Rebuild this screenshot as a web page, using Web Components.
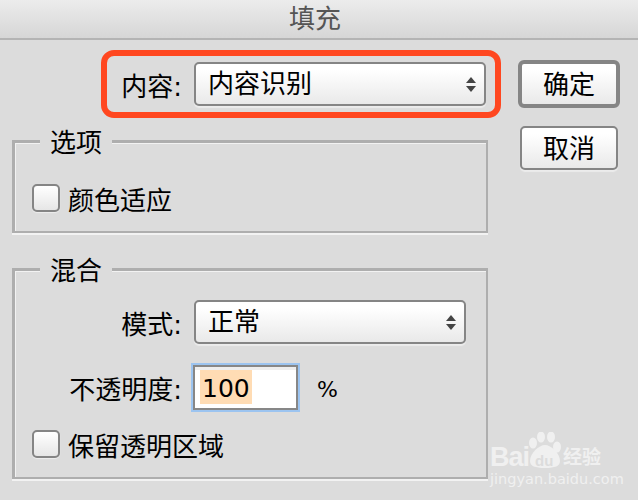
<!DOCTYPE html>
<html lang="zh">
<head>
<meta charset="utf-8">
<title>填充</title>
<style>
  html, body { margin: 0; height: 100%; overflow: hidden; }
  body {
    background: #dcdcdc;
    color: #000;
    font: 26px "DejaVu Sans", "Noto Sans CJK SC", sans-serif;
  }
</style>
</head>
<body>
<fill-dialog>
  <span slot="title">填充</span>
  <highlight-box slot="top">
    <form-row label="内容:" label-width="87">
      <select-box width="292" value="内容识别"></select-box>
    </form-row>
  </highlight-box>
  <group-box slot="groups" legend="选项" style="height:93px">
    <check-row style="margin-top:37px">颜色适应</check-row>
  </group-box>
  <group-box slot="groups" legend="混合" style="height:211px;margin-top:35px">
    <div style="display:flex;flex-direction:column">
      <form-row label="模式:" label-width="162" style="margin-top:29px">
        <select-box width="272" value="正常"></select-box>
      </form-row>
      <form-row label="不透明度:" label-width="162" style="margin-top:19px">
        <percent-field value="100"></percent-field>
      </form-row>
      <check-row style="margin-top:14px">保留透明区域</check-row>
    </div>
  </group-box>
  <dialog-button slot="actions" primary>确定</dialog-button>
  <dialog-button slot="actions">取消</dialog-button>
</fill-dialog>
<baidu-mark></baidu-mark>

<script>
class FillDialog extends HTMLElement {
  constructor () {
    super()
    this.attachShadow({ mode: 'open' }).innerHTML = /* html */`
      <style>
        :host { display: block; width: 638px; height: 500px; }
        header {
          height: 38px;
          border-bottom: 2px solid #b4b4b4;
          background: linear-gradient(#ececec, #d6d6d6);
          color: #555;
          font-size: 26px;
          line-height: 38px;
          text-align: center;
          padding-right: 8px;
        }
        .body { display: flex; padding-left: 12px; }
        .left { width: 489px; }
        .top { padding: 10px 0 22px 89px; }
        .actions { display: flex; flex-direction: column; align-items: center; width: 102px; margin-left: 17px; padding-top: 20px; gap: 18px; }
      </style>
      <header><slot name="title"></slot></header>
      <div class="body">
        <div class="left">
          <div class="top"><slot name="top"></slot></div>
          <slot name="groups"></slot>
        </div>
        <div class="actions"><slot name="actions"></slot></div>
      </div>`
  }
}

class HighlightBox extends HTMLElement {
  constructor () {
    super()
    this.attachShadow({ mode: 'open' }).innerHTML = /* html */`
      <style>
        :host {
          display: flex;
          align-items: center;
          box-sizing: border-box;
          width: 400px;
          height: 68px;
          border: 6px solid #ff4720;
          border-radius: 13px;
        }
      </style>
      <slot></slot>`
  }
}

class FormRow extends HTMLElement {
  constructor () {
    super()
    this.attachShadow({ mode: 'open' })
  }

  connectedCallback () {
    const w = this.getAttribute('label-width')
    this.shadowRoot.innerHTML = /* html */`
      <style>
        :host { display: flex; align-items: center; }
        label { width: ${w}px; box-sizing: border-box; padding-right: 12px; text-align: right; white-space: nowrap; }
      </style>
      <label>${this.getAttribute('label')}</label>
      <slot></slot>`
  }
}

class SelectBox extends HTMLElement {
  constructor () {
    super()
    this.attachShadow({ mode: 'open' })
  }

  connectedCallback () {
    this.shadowRoot.innerHTML = /* html */`
      <style>
        :host {
          display: flex;
          align-items: center;
          justify-content: space-between;
          box-sizing: border-box;
          width: ${this.getAttribute('width')}px;
          height: 44px;
          padding: 0 8px 0 13px;
          border: 2px solid #858585;
          border-radius: 5px;
          background: linear-gradient(#fff 15%, #e9e9e9);
          box-shadow: 0 2px 1px #ececec;
        }
        span { font-size: 26px; line-height: 40px; margin-left: -1px; }
        svg { display: block; }
      </style>
      <span>${this.getAttribute('value')}</span>
      <svg width="10" height="15" viewBox="0 0 10 15"><path d="M5 0 10 6H0Z" fill="#444"/><path d="M0 9H10L5 15Z" fill="#444"/></svg>`
  }
}

class GroupBox extends HTMLElement {
  constructor () {
    super()
    this.attachShadow({ mode: 'open' })
  }

  connectedCallback () {
    this.shadowRoot.innerHTML = /* html */`
      <style>
        :host { display: block; position: relative; box-sizing: border-box; width: 476px; }
        .frame {
          box-sizing: border-box;
          height: 100%;
          border: 3px solid #aeaeae;
          border-right-width: 2px;
          border-bottom-width: 2px;
          box-shadow: inset 1px 1px 0 #f2f2f2, 0 2px 0 #f2f2f2;
          padding: 0 0 0 17px;
          overflow: hidden;
        }
        /* legend sits on top of the frame line */
        .legend {
          position: absolute;
          left: 28px;
          top: -15px;
          padding: 0 10px;
          background: #dcdcdc;
          font-size: 26px;
          line-height: 36px;
        }
      </style>
      <div class="frame"><slot></slot></div>
      <div class="legend">${this.getAttribute('legend')}</div>`
  }
}

class CheckRow extends HTMLElement {
  constructor () {
    super()
    this.attachShadow({ mode: 'open' }).innerHTML = /* html */`
      <style>
        :host { display: flex; align-items: center; gap: 8px; font-size: 26px; line-height: 36px; }
        i {
          display: block;
          box-sizing: border-box;
          width: 28px;
          height: 28px;
          border: 2px solid #858585;
          border-radius: 5px;
          background: linear-gradient(#fff, #e6e6e6);
          box-shadow: 0 1px 1px #eee;
        }
        span { margin: 3px 0 -3px; }
      </style>
      <i></i><span><slot></slot></span>`
  }
}

class PercentField extends HTMLElement {
  constructor () {
    super()
    this.attachShadow({ mode: 'open' })
  }

  connectedCallback () {
    this.shadowRoot.innerHTML = /* html */`
      <style>
        :host { display: flex; align-items: center; margin-left: -3px; }
        .input {
          box-sizing: border-box;
          width: 105px;
          height: 45px;
          padding: 3px 0 0 5px;
          border: 2px solid #878787;
          outline: 2px solid #9cc4f0;
          margin: 2px;
          background: #fff;
          box-shadow: inset 0 3px 0 #eee;
        }
        mark { display: block; width: 50px; height: 34px; padding-left: 2px; background: #ffdcb4; color: #000; font-size: 25px; line-height: 38px; }
        .pct { margin-left: 17px; font-size: 22px; margin-top: 3px; }
      </style>
      <div class="input"><mark>${this.getAttribute('value')}</mark></div>
      <span class="pct">%</span>`
  }
}

class DialogButton extends HTMLElement {
  constructor () {
    super()
    this.attachShadow({ mode: 'open' }).innerHTML = /* html */`
      <style>
        :host {
          display: flex;
          align-items: center;
          justify-content: center;
          box-sizing: border-box;
          width: 98px;
          height: 44px;
          padding-bottom: 4px;
          border: 2px solid #858585;
          border-radius: 5px;
          background: linear-gradient(#fff 15%, #e9e9e9);
          box-shadow: 0 2px 1px #ececec;
          font-size: 26px;
        }
        :host([primary]) {
          width: 102px;
          height: 48px;
          border-width: 4px;
          border-radius: 6px;
          box-shadow: none;
        }
      </style>
      <slot></slot>`
  }
}

class BaiduMark extends HTMLElement {
  constructor () {
    super()
    this.attachShadow({ mode: 'open' }).innerHTML = /* html */`
      <style>
        /* watermark lies over the screenshot */
        :host { position: absolute; left: 488px; top: 428px; width: 122px; height: 62px; color: #f0f0f0; }
        .bai { position: absolute; left: 2px; top: 14px; font: bold 27px/30px "Liberation Sans", sans-serif; letter-spacing: -1px; }
        .du { position: absolute; left: 47px; top: 25px; font: bold 15px/16px "Liberation Sans", sans-serif; color: #dcdcdc; }
        .jy { position: absolute; left: 75px; top: 17px; font-size: 19px; line-height: 24px; font-weight: bold; white-space: nowrap; }
        .url { position: absolute; left: 2px; top: 42px; font: 14.5px/18px "DejaVu Sans", sans-serif; white-space: nowrap; }
        svg { position: absolute; left: 40px; top: 4px; }
      </style>
      <svg width="33" height="36" viewBox="0 0 33 36" fill="#f0f0f0">
        <ellipse cx="5" cy="11" rx="4" ry="5.5"/>
        <ellipse cx="13" cy="5" rx="4" ry="5.5"/>
        <ellipse cx="23" cy="5" rx="4" ry="5.5"/>
        <ellipse cx="29" cy="15" rx="4" ry="5.5"/>
        <path d="M17 13C11 13 2 21 2 29c0 5 5 7 15 7s15-2 15-7c0-8-9-16-15-16Z"/>
      </svg>
      <div class="bai">Bai</div>
      <div class="du">du</div>
      <div class="jy">经验</div>
      <div class="url">jingyan.baidu.com</div>`
  }
}

customElements.define('fill-dialog', FillDialog)
customElements.define('highlight-box', HighlightBox)
customElements.define('form-row', FormRow)
customElements.define('select-box', SelectBox)
customElements.define('group-box', GroupBox)
customElements.define('check-row', CheckRow)
customElements.define('percent-field', PercentField)
customElements.define('dialog-button', DialogButton)
customElements.define('baidu-mark', BaiduMark)
</script>
</body>
</html>
